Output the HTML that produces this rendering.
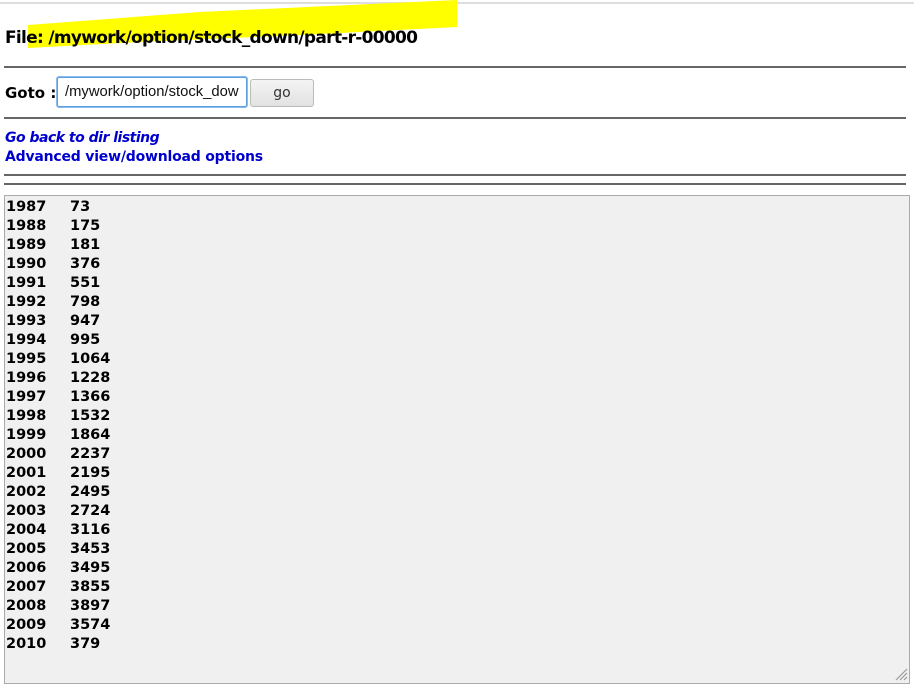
<!DOCTYPE html>
<html><head><style>
body{margin:0;width:914px;height:688px;position:relative;background:#fff;font-family:"DejaVu Sans","Liberation Sans",sans-serif;overflow:hidden}
.a{position:absolute}
.hr{position:absolute;left:4px;width:902px;height:0;border-top:2px solid #666}
a{color:#00c}
</style></head><body>
<div class="a" style="left:0;top:2px;width:914px;height:2px;background:#ddd"></div>
<svg class="a" style="left:0;top:0" width="914" height="60"><polygon points="28,25 200,12 457,0 457,27 300,35 140,42 28,48" fill="#ffff00"/></svg>
<div class="a" style="left:5px;top:28px;font-size:17px;font-weight:bold;letter-spacing:-0.7px">File: <a style="color:#000">/mywork</a>/<a style="color:#000">option</a>/<a style="color:#000;text-decoration-color:#00c">stock_down</a>/part-r-00000</div>
<div class="hr" style="top:66px"></div>
<div class="a" style="left:5px;top:84px;font-size:15px;font-weight:bold">Goto :</div>
<div class="a" style="left:57px;top:77px;width:190px;height:30px;border:1px solid #5a9de0;box-shadow:0 0 0 1px #8bbcee;border-radius:2px;box-sizing:border-box;font-family:'Liberation Sans',sans-serif;font-size:14.8px;line-height:28px;padding-left:7px;white-space:nowrap;overflow:hidden;color:#111">/mywork/option/stock_dow</div>
<div class="a" style="left:250px;top:79px;width:64px;height:28px;border:1px solid #bbb;border-radius:3px;box-sizing:border-box;background:linear-gradient(#f4f4f4,#e2e2e2);font-size:14px;text-align:center;line-height:26px;color:#333">go</div>
<div class="hr" style="top:117px"></div>
<div class="a" style="left:5px;top:129px;font-size:14px;font-weight:bold;line-height:19px;letter-spacing:-0.2px"><a style="font-style:italic;letter-spacing:-0.5px">Go back to dir listing</a><br><a>Advanced view/download options</a></div>
<div class="hr" style="top:174px"></div>
<div class="hr" style="top:183px"></div>
<div class="a" style="left:4px;top:195px;width:906px;height:489px;background:#f0f0f0;border:1px solid #aaa;box-sizing:border-box"></div>
<pre class="a" style="margin:0;left:6px;top:198px;font-family:'DejaVu Sans',sans-serif;font-weight:bold;font-size:14.5px;line-height:19px;tab-size:64px;-moz-tab-size:64px">1987	73
1988	175
1989	181
1990	376
1991	551
1992	798
1993	947
1994	995
1995	1064
1996	1228
1997	1366
1998	1532
1999	1864
2000	2237
2001	2195
2002	2495
2003	2724
2004	3116
2005	3453
2006	3495
2007	3855
2008	3897
2009	3574
2010	379</pre>
<svg class="a" style="left:894px;top:667px" width="14" height="15"><path d="M13 2 L2 13 M13 6 L6 13 M13 10 L10 13" stroke="#999" stroke-width="1.2"/></svg>
</body></html>
